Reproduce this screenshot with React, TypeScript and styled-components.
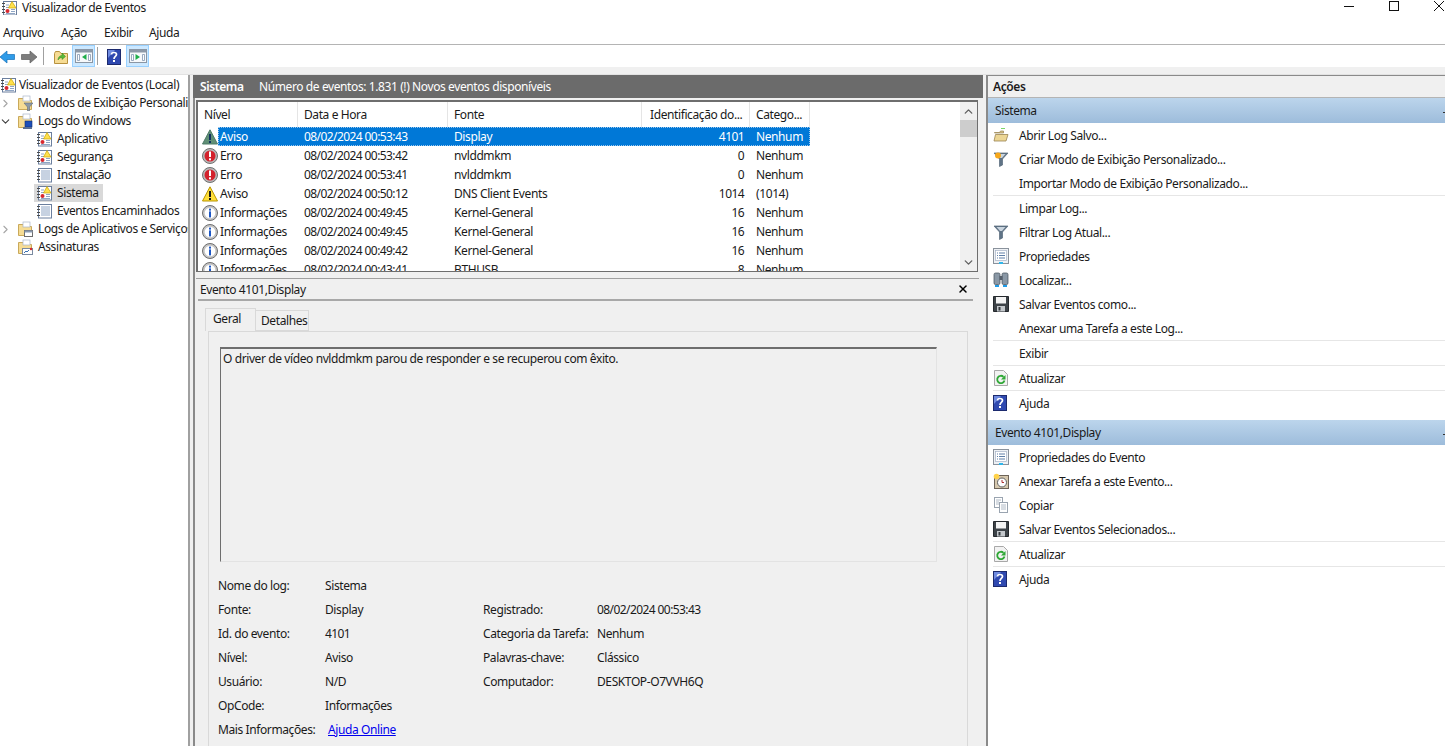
import React from "react"
import styled, { createGlobalStyle } from "styled-components"
import { ChevronRight, ChevronDown, ChevronUp, X } from "lucide-react"

const GlobalStyle = createGlobalStyle`
  html, body {
    margin: 0;
    padding: 0;
    height: 100%;
    overflow: hidden;
    background: #fff;
  }
  body {
    font-family: "Noto Sans", "Open Sans", "Liberation Sans", sans-serif;
    font-size: 12px;
    letter-spacing: -0.4px;
    color: #1a1a1a;
  }
  * { box-sizing: border-box; }
  svg { flex: none; }
`

const Window = styled.div`
  width: 1445px;
  height: 746px;
  display: flex;
  flex-direction: column;
  overflow: hidden;
  background: #f0f0f0;
`

const TitleBar = styled.div`
  height: 15px;
  flex: none;
  display: flex;
  align-items: center;
  background: #fff;
  padding-left: 2px;
`

const TitleText = styled.span`
  margin-left: 4px;
  flex: 1;
  line-height: 15px;
`

const WindowButtons = styled.div`
  display: flex;
  align-self: flex-start;
  align-items: center;
  height: 11px;
  gap: 35px;
  padding-right: 1px;
`

const MenuBar = styled.div`
  height: 30px;
  flex: none;
  display: flex;
  align-items: center;
  padding: 6px 0 0 3px;
  background: #fff;
  border-bottom: 1px solid #b4b4b4;
`

const MenuItem = styled.span<{ $w: number }>`
  width: ${({ $w }) => $w}px;
`

const ToolBar = styled.div`
  height: 22px;
  flex: none;
  display: flex;
  align-items: center;
  background: #fff;
`

const ToolIcon = styled.span<{ $ml?: number }>`
  display: flex;
  margin-top: 1px;
  margin-left: ${({ $ml }) => $ml ?? 0}px;
`

const ToolToggle = styled.span<{ $ml: number }>`
  width: 23px;
  height: 22px;
  margin-left: ${({ $ml }) => $ml}px;
  display: flex;
  align-items: center;
  justify-content: center;
  background: #cce8ff;
  border: 1px solid #99d1ff;
`

const ToolSep = styled.span<{ $ml: number }>`
  width: 1px;
  height: 18px;
  margin-left: ${({ $ml }) => $ml}px;
  background: #a0a0a0;
`

const Body = styled.div`
  flex: 1;
  min-height: 0;
  display: flex;
  margin-top: 7px;
  border-top: 1px solid #e2e2e2;
  background: #f0f0f0;
`

const TreePane = styled.div`
  width: 190px;
  flex: none;
  padding-top: 1px;
  background: #fff;
  border-right: 2px solid #a0a0a0;
  overflow: hidden;
`

const TreeRow = styled.div<{ $level: number }>`
  height: 18px;
  display: flex;
  align-items: center;
  white-space: nowrap;
  padding-left: ${({ $level }) => ($level === 0 ? 1 : $level === 1 ? 0 : 37)}px;
`

const Twisty = styled.span`
  width: 17px;
  flex: none;
  margin-left: -3px;
  margin-right: 3px;
  display: flex;
  justify-content: center;
  color: #a6a6a6;

  &[data-open="true"] {
    color: #404040;
  }
`

const TreeLabel = styled.span<{ $ml?: number; $selected?: boolean }>`
  margin-left: ${({ $ml }) => $ml ?? 4}px;
  padding-right: ${({ $selected }) => ($selected ? 4 : 0)}px;
  line-height: 18px;
`

const SelectedTreeItem = styled.span`
  display: flex;
  align-items: center;
  margin-left: -3px;
  padding-left: 3px;
  background: #d9d9d9;
`

const CenterPane = styled.div`
  width: 790px;
  flex: none;
  margin-left: 3px;
  display: flex;
  flex-direction: column;
  border-left: 2px solid #8a8a8a;
  min-height: 0;
`

const PaneHeader = styled.div`
  height: 23px;
  flex: none;
  display: flex;
  align-items: center;
  background: #6b6b6b;
  color: #fff;
  margin-left: -2px;
  padding-left: 7px;
`

const PaneTitle = styled.span`
  font-weight: 600;
  width: 59px;
`

const ListBox = styled.div`
  height: 172px;
  flex: none;
  margin: 2px 5px 0 1px;
  background: #fff;
  border-top: 2px solid #6e6e6e;
  border-left: 2px solid #6e6e6e;
  border-right: 1px solid #6e6e6e;
  border-bottom: 1px solid #6e6e6e;
  display: flex;
  overflow: hidden;
`

const ListMain = styled.div`
  flex: 1;
  min-width: 0;
  overflow: hidden;
`

const HeaderRow = styled.div`
  height: 25px;
  width: 612px;
  display: flex;
`

const HeadCell = styled.span<{ $w: number; $pad?: number }>`
  width: ${({ $w }) => $w}px;
  flex: none;
  display: flex;
  align-items: center;
  padding-left: ${({ $pad }) => $pad ?? 6}px;
  border-right: 1px solid #e5e5e5;
  white-space: nowrap;
`

const EventRow = styled.div`
  height: 19px;
  width: 612px;
  display: flex;
  align-items: center;
  padding-left: 4px;
`

const RowBand = styled.div<{ $selected?: boolean }>`
  width: 592px;
  height: 19px;
  display: flex;
  align-items: center;
  color: ${({ $selected }) => ($selected ? "#fff" : "#1a1a1a")};
  background: ${({ $selected }) => ($selected ? "#0078d7" : "transparent")};
  outline: ${({ $selected }) => ($selected ? "1px dotted #9cc8ee" : "none")};
  outline-offset: -1px;
`

const Cell = styled.span<{ $w: number; $right?: boolean; $pad?: number; $tight?: boolean }>`
  width: ${({ $w }) => $w}px;
  flex: none;
  padding: 0 ${({ $right }) => ($right ? 6 : 0)}px 0 ${({ $pad }) => $pad ?? 6}px;
  text-align: ${({ $right }) => ($right ? "right" : "left")};
  white-space: nowrap;
  letter-spacing: ${({ $tight }) => ($tight ? "-0.58px" : "inherit")};
`

const Scrollbar = styled.div`
  width: 17px;
  flex: none;
  display: flex;
  flex-direction: column;
  background: #f0f0f0;
`

const ScrollArrow = styled.span`
  height: 18px;
  flex: none;
  display: flex;
  align-items: center;
  justify-content: center;
  color: #606060;
`

const ScrollTrack = styled.div`
  flex: 1;
`

const ScrollThumb = styled.div`
  height: 17px;
  background: #cdcdcd;
`

const DetailPane = styled.div`
  flex: 1;
  min-height: 0;
  margin: 6px 4px 0 1px;
  border-top: 1px solid #a0a0a0;
  overflow: hidden;
`

const DetailHeader = styled.div`
  height: 22px;
  margin-left: 2px;
  margin-right: 6px;
  display: flex;
  align-items: center;
  justify-content: space-between;
  padding: 0 4px 0 2px;
  border-bottom: 2px solid #a8a8a8;
`

const TabStrip = styled.div`
  height: 30px;
  display: flex;
  align-items: flex-end;
  padding-left: 9px;
`

const Tab = styled.span<{ $active?: boolean; $w: number }>`
  display: flex;
  align-items: center;
  width: ${({ $w }) => $w}px;
  height: ${({ $active }) => ($active ? 23 : 21)}px;
  padding: 0 0 ${({ $active }) => ($active ? 3 : 0)}px ${({ $active }) => ($active ? 7 : 5)}px;
  background: #f0f0f0;
  border: 1px solid #d9d9d9;
  border-bottom: ${({ $active }) => ($active ? "none" : "1px solid #d9d9d9")};
  border-left: ${({ $active }) => ($active ? "1px solid #d9d9d9" : "none")};
`

const TabBody = styled.div`
  margin-left: 12px;
  width: 760px;
  height: 420px;
  padding: 15px 0 0 11px;
  border-top: 1px solid #d9d9d9;
  border-left: 1px solid #d9d9d9;
  border-right: 1px solid #d9d9d9;
`

const MessageBox = styled.div`
  width: 717px;
  height: 215px;
  padding: 1px 2px;
  border-top: 2px solid #6e6e6e;
  border-left: 1px solid #6e6e6e;
  border-bottom: 1px solid #e3e3e3;
  border-right: 1px solid #e3e3e3;
`

const FieldGrid = styled.div`
  margin: 11px 0 0 -2px;
  display: grid;
  grid-template-columns: 107px 158px 114px 1fr;
  grid-auto-rows: 24px;
  align-items: center;
  white-space: nowrap;
`

const TightValue = styled.span`
  letter-spacing: -0.58px;
`

const HelpLink = styled.a`
  color: #0000ee;
  text-decoration: underline;
  margin-left: 3px;
`

const ActionsPane = styled.div`
  flex: 1;
  min-width: 0;
  margin-left: 3px;
  display: flex;
  flex-direction: column;
  background: #fff;
  border-left: 2px solid #8a8a8a;
  border-top: 1px solid #8a8a8a;
`

const ActionsTitle = styled.div`
  height: 22px;
  flex: none;
  display: flex;
  align-items: center;
  padding-left: 5px;
  font-weight: 600;
  background: #f0f0f0;
  border-bottom: 1px solid #b4b4b4;
`

const ActionHead = styled.div<{ $gap?: number }>`
  height: 25px;
  flex: none;
  display: flex;
  align-items: center;
  justify-content: space-between;
  padding-left: 7px;
  margin-top: ${({ $gap }) => $gap ?? 0}px;
  background: linear-gradient(#bcd5ec, #9dbcdb);
  color: #1a1a1a;

  &::after {
    content: "";
    width: 2px;
    height: 1px;
    margin-top: 3px;
    background: #333;
  }
`

const ActionItem = styled.div`
  height: 24px;
  flex: none;
  display: flex;
  align-items: center;
  padding-left: 5px;
`

const ActionIcon = styled.span`
  width: 26px;
  flex: none;
  display: flex;
`

const ActionSep = styled.div`
  height: 1px;
  flex: none;
  margin: 0 0 0 5px;
  background: #e6e6e6;
`

// ---- icons ----

const LogIcon = ({ flagged }: { flagged?: boolean }) => (
  <svg width="16" height="16" viewBox="0 0 16 16">
    <rect x="1.500" y="1.500" width="13" height="13.500" fill="#fff" stroke="#6b7f9e" />
    <path d="M0 3.500h3M0 6.500h3M0 9.500h3M0 12.500h3" stroke="#4a4a4a" />
    {flagged ? (
      <>
        <path d="M4 5h3M4 7.500h3M9 9.500h4M9 11.500h4M4 13.500h9" stroke="#8fa5c4" />
        <path d="M10 1.500 14 8H6.500z" fill="#ffe14d" stroke="#c9a400" strokeWidth=".7" />
        <circle cx="5.500" cy="11" r="2" fill="#d8282f" />
      </>
    ) : (
      <path d="M4 4h9M4 6h9M4 8h9M4 10h9M4 12h9" stroke="#8fa5c4" />
    )}
  </svg>
)

const FolderBase = ({ children }: { children?: React.ReactNode }) => (
  <svg width="16" height="16" viewBox="0 0 16 16">
    <path d="M1.500 3.500V14.500H14.500V5.500H8L6.500 3.500z" fill="#f6dc94" stroke="#c9a95a" />
    <rect x="6" y="1" width="7" height="5" fill="#fff" stroke="#a9b6c8" strokeWidth=".7" />
    {children}
  </svg>
)

const FilterFolderIcon = () => (
  <FolderBase>
    <path d="M7 8h9l-3.500 4v4h-2v-4z" fill="#8d9aa8" stroke="#5f6b78" strokeWidth=".6" />
  </FolderBase>
)

const WindowsFolderIcon = () => (
  <FolderBase>
    <rect x="8" y="8" width="7" height="6" fill="#1d4fb8" stroke="#0f2c70" strokeWidth=".6" />
    <rect x="6" y="14" width="9" height="2" fill="#5a6f94" />
  </FolderBase>
)

const AppsFolderIcon = () => (
  <FolderBase>
    <rect x="7.500" y="9.500" width="8" height="6" fill="#fff" stroke="#6e6e6e" />
    <rect x="7.500" y="9.500" width="8" height="2" fill="#8a9ab0" />
  </FolderBase>
)

const SubsFolderIcon = () => (
  <FolderBase>
    <rect x="5.500" y="9.500" width="10" height="6" fill="#fff" stroke="#7a8aa0" />
    <path d="M7 14l2-2 1 1 2-2" stroke="#3a70b0" fill="none" />
    <circle cx="14" cy="10" r="1.200" fill="#d8282f" />
  </FolderBase>
)

const WarnIcon = ({ selected }: { selected?: boolean }) => (
  <svg width="16" height="16" viewBox="0 0 16 16">
    <path
      d="M8 .8 15.500 15H.5z"
      fill={selected ? "#5f8f75" : "#ffdf3a"}
      stroke={selected ? "#4f7a68" : "#b89400"}
      strokeLinejoin="round"
    />
    <rect x="7" y="5" width="2" height="6" fill={selected ? "#12305f" : "#1a1a1a"} />
    <rect x="7" y="12" width="2" height="2" fill={selected ? "#12305f" : "#1a1a1a"} />
  </svg>
)

const ErrorIcon = () => (
  <svg width="16" height="16" viewBox="0 0 16 16">
    <circle cx="8" cy="8" r="7.500" fill="#b9b9b9" stroke="#707070" />
    <circle cx="8" cy="8" r="5.500" fill="#d3212c" />
    <rect x="7" y="3.500" width="2" height="5.500" fill="#fff" />
    <rect x="7" y="10.300" width="2" height="2" fill="#fff" />
  </svg>
)

const InfoIcon = () => (
  <svg width="16" height="16" viewBox="0 0 16 16">
    <circle cx="8" cy="8" r="7.500" fill="#c6c6c6" stroke="#6e6e6e" />
    <circle cx="8" cy="8" r="5.300" fill="#fff" />
    <rect x="7" y="3.600" width="2" height="2" fill="#1c56c4" />
    <rect x="7" y="6.400" width="2" height="6" fill="#1c56c4" />
  </svg>
)

const BackArrow = () => (
  <svg width="15" height="14" viewBox="0 0 15 14">
    <path d="M0 7 7 1v3.500h7.500v5H7V13z" fill="#2f9be8" stroke="#1570b8" strokeWidth=".7" />
  </svg>
)

const ForwardArrow = () => (
  <svg width="16" height="14" viewBox="0 0 16 14">
    <path d="M16 7 9 1v3.500H.5v5H9V13z" fill="#7d7d7d" stroke="#5e5e5e" strokeWidth=".7" />
  </svg>
)

const UpFolderIcon = () => (
  <svg width="16" height="16" viewBox="0 0 16 16">
    <path d="M1.500 4.500V14.500H14.500V4.500H8L6.500 2.500H2.500z" fill="#f6dc94" stroke="#b8923f" />
    <path d="M5 11c0-3 2-4.500 4-4.500V4l3.500 3.500L9 10.500V8.500C7.500 8.500 6 9.500 5 11z" fill="#5cb83a" stroke="#2f8a1d" strokeWidth=".5" />
  </svg>
)

const PanelIcon = ({ side }: { side: "left" | "right" }) => (
  <svg width="18" height="14" viewBox="0 0 18 14">
    <rect x=".5" y=".5" width="17" height="13" fill="#f7f9fb" stroke="#8a96a4" />
    <rect x="1" y="1" width="16" height="2.500" fill="#8d99a8" />
    <path d="M2.500 5.500h2v6h-2zM13.500 5.500h2v6h-2z" fill="#fff" stroke="#8296b0" strokeWidth=".8" />
    {side === "left" ? (
      <path d="M11.500 5v6L7 8z" fill="#1fae4a" />
    ) : (
      <path d="M6.500 5v6l4.500-3z" fill="#1fae4a" />
    )}
  </svg>
)

const HelpIcon = () => (
  <svg width="14" height="16" viewBox="0 0 14 16">
    <rect x=".5" y=".5" width="13" height="15" fill="#2f49b0" stroke="#1c2a6e" />
    <path d="M1 1h7L1 9z" fill="#6f8be0" />
    <path d="M4.500 5.500C4.500 2.800 9.500 2.800 9.500 5.500 9.500 7.500 7 7.500 7 10" fill="none" stroke="#fff" strokeWidth="1.700" />
    <rect x="6" y="11" width="2" height="2" fill="#fff" />
  </svg>
)

const OpenIcon = () => (
  <svg width="16" height="16" viewBox="0 0 16 16">
    <path d="M8 1.500h4" stroke="#7bd66a" />
    <path d="M1.500 5.500h5l1-1.500h3v2H1.500z" fill="#d9c48a" stroke="#9a8452" strokeWidth=".7" />
    <path d="M1 14 2.500 7.500H15L13 14z" fill="#ecd695" stroke="#9a8452" strokeWidth=".8" />
  </svg>
)

const FunnelIcon = ({ sun }: { sun?: boolean }) => (
  <svg width="16" height="16" viewBox="0 0 16 16">
    <path d="M1 2h14L9.500 8v6l-3 1.500V8z" fill="#5f7386" stroke="#56687a" strokeWidth=".7" />
    <path d="M3.500 3h9L9 7H7z" fill="#c9d4de" />
    {sun && <circle cx="5" cy="4.500" r="3" fill="#f6a81c" />}
  </svg>
)

const PropsIcon = () => (
  <svg width="16" height="16" viewBox="0 0 16 16">
    <rect x=".5" y=".5" width="15" height="15" fill="#eef1f5" stroke="#8a929c" />
    <rect x="2.500" y="2.500" width="11" height="10" fill="#fff" stroke="#a5b3c6" strokeWidth=".7" />
    <path d="M4 5h1M6 5h6M4 7.500h1M6 7.500h6M4 10h1M6 10h6" stroke="#5f7fa8" />
    <rect x="6" y="14" width="4" height="2" fill="#2fb6ea" />
  </svg>
)

const BinocularsIcon = () => (
  <svg width="16" height="16" viewBox="0 0 16 16">
    <rect x="1" y="1" width="6" height="11.500" rx="1.500" fill="#8a98a6" stroke="#3f4a56" strokeWidth=".7" />
    <rect x="9" y="1" width="6" height="11.500" rx="1.500" fill="#8a98a6" stroke="#3f4a56" strokeWidth=".7" />
    <rect x="6.500" y="4" width="3" height="4" fill="#56606c" />
    <path d="M2 14h4M10 14h4" stroke="#1e9be8" strokeWidth="2" />
  </svg>
)

const SaveIcon = () => (
  <svg width="16" height="16" viewBox="0 0 16 16">
    <path d="M.5.5h15v15H.5z" fill="#3d4348" stroke="#25292d" />
    <rect x="3" y="1" width="10" height="6.500" fill="#f4f4f4" />
    <rect x="4" y="10" width="8" height="5.500" fill="#c4c8cc" />
    <rect x="5.500" y="11" width="2" height="3.500" fill="#33383c" />
  </svg>
)

const RefreshIcon = () => (
  <svg width="16" height="16" viewBox="0 0 16 16">
    <path d="M1.500.5h9l4 4v11h-13z" fill="#f2f2f2" stroke="#a8a8a8" />
    <path d="M11.500 10.500a3.700 3.700 0 1 1-1-3.700" fill="none" stroke="#2fa836" strokeWidth="1.800" />
    <path d="M12.500 5v4.500H8z" fill="#2fa836" />
  </svg>
)

const ClockIcon = () => (
  <svg width="16" height="16" viewBox="0 0 16 16">
    <rect x="1.500" y="2.500" width="14" height="13" fill="#d6c8ae" stroke="#6e6458" />
    <circle cx="9" cy="9.500" r="4.500" fill="#fff" stroke="#5f5f5f" />
    <path d="M9 7v2.500h2" stroke="#b03030" fill="none" />
    <circle cx="3.500" cy="3.500" r="2.800" fill="#ffd24a" />
  </svg>
)

const CopyIcon = () => (
  <svg width="16" height="16" viewBox="0 0 16 16">
    <rect x="1.500" y=".5" width="8" height="10" fill="#fff" stroke="#9aa4b0" />
    <rect x="6.500" y="5.500" width="8" height="10" fill="#fff" stroke="#9aa4b0" />
    <path d="M3 3h5M3 5h3M3 7h3M8 8h5M8 10h5M8 12h5" stroke="#b0bac6" />
  </svg>
)

const MinimizeGlyph = () => (
  <svg width="10" height="11" viewBox="0 0 10 11">
    <path d="M0 6.500h10" stroke="#111" />
  </svg>
)

const MaximizeGlyph = () => (
  <svg width="10" height="10" viewBox="0 0 10 10">
    <rect x=".5" y=".5" width="9" height="9" fill="none" stroke="#111" />
  </svg>
)

const CloseGlyph = () => (
  <svg width="10" height="10" viewBox="0 0 10 10">
    <path d="M0 0l10 10M10 0 0 10" stroke="#111" strokeWidth="1" />
  </svg>
)

// ---- data ----

const events = [
  { kind: "warn", level: "Aviso", date: "08/02/2024 00:53:43", source: "Display", id: "4101", cat: "Nenhum" },
  { kind: "error", level: "Erro", date: "08/02/2024 00:53:42", source: "nvlddmkm", id: "0", cat: "Nenhum" },
  { kind: "error", level: "Erro", date: "08/02/2024 00:53:41", source: "nvlddmkm", id: "0", cat: "Nenhum" },
  { kind: "warn", level: "Aviso", date: "08/02/2024 00:50:12", source: "DNS Client Events", id: "1014", cat: "(1014)" },
  { kind: "info", level: "Informações", date: "08/02/2024 00:49:45", source: "Kernel-General", id: "16", cat: "Nenhum" },
  { kind: "info", level: "Informações", date: "08/02/2024 00:49:45", source: "Kernel-General", id: "16", cat: "Nenhum" },
  { kind: "info", level: "Informações", date: "08/02/2024 00:49:42", source: "Kernel-General", id: "16", cat: "Nenhum" },
  { kind: "info", level: "Informações", date: "08/02/2024 00:43:41", source: "BTHUSB", id: "8", cat: "Nenhum" },
]

const systemActions: (["sep"] | [React.ReactNode, string])[] = [
  [<OpenIcon />, "Abrir Log Salvo..."],
  [<FunnelIcon sun />, "Criar Modo de Exibição Personalizado..."],
  [null, "Importar Modo de Exibição Personalizado..."],
  ["sep"],
  [null, "Limpar Log..."],
  [<FunnelIcon />, "Filtrar Log Atual..."],
  [<PropsIcon />, "Propriedades"],
  [<BinocularsIcon />, "Localizar..."],
  [<SaveIcon />, "Salvar Eventos como..."],
  [null, "Anexar uma Tarefa a este Log..."],
  ["sep"],
  [null, "Exibir"],
  ["sep"],
  [<RefreshIcon />, "Atualizar"],
  ["sep"],
  [<HelpIcon />, "Ajuda"],
]

const eventActions: (["sep"] | [React.ReactNode, string])[] = [
  [<PropsIcon />, "Propriedades do Evento"],
  [<ClockIcon />, "Anexar Tarefa a este Evento..."],
  [<CopyIcon />, "Copiar"],
  [<SaveIcon />, "Salvar Eventos Selecionados..."],
  ["sep"],
  [<RefreshIcon />, "Atualizar"],
  ["sep"],
  [<HelpIcon />, "Ajuda"],
]

function ActionList({ items }: { items: (["sep"] | [React.ReactNode, string])[] }) {
  return (
    <>
      {items.map((item, i) =>
        item[0] === "sep" ? (
          <ActionSep key={i} />
        ) : (
          <ActionItem key={i}>
            <ActionIcon>{item[0]}</ActionIcon>
            {item[1]}
          </ActionItem>
        )
      )}
    </>
  )
}

export default function App() {
  return (
    <Window>
      <GlobalStyle />
      <TitleBar>
        <LogIcon flagged />
        <TitleText>Visualizador de Eventos</TitleText>
        <WindowButtons>
          <MinimizeGlyph />
          <MaximizeGlyph />
          <CloseGlyph />
        </WindowButtons>
      </TitleBar>
      <MenuBar>
        <MenuItem $w={58}>Arquivo</MenuItem>
        <MenuItem $w={43}>Ação</MenuItem>
        <MenuItem $w={45}>Exibir</MenuItem>
        <MenuItem $w={50}>Ajuda</MenuItem>
      </MenuBar>
      <ToolBar>
        <ToolIcon><BackArrow /></ToolIcon>
        <ToolIcon $ml={6}><ForwardArrow /></ToolIcon>
        <ToolSep $ml={6} />
        <ToolIcon $ml={9}><UpFolderIcon /></ToolIcon>
        <ToolToggle $ml={3}><PanelIcon side="left" /></ToolToggle>
        <ToolSep $ml={2} />
        <ToolIcon $ml={9}><HelpIcon /></ToolIcon>
        <ToolToggle $ml={5}><PanelIcon side="right" /></ToolToggle>
      </ToolBar>
      <Body>
        <TreePane>
          <TreeRow $level={0}>
            <LogIcon flagged />
            <TreeLabel $ml={2}>Visualizador de Eventos (Local)</TreeLabel>
          </TreeRow>
          <TreeRow $level={1}>
            <Twisty><ChevronRight size={13} /></Twisty>
            <FilterFolderIcon />
            <TreeLabel $ml={5}>Modos de Exibição Personalizados</TreeLabel>
          </TreeRow>
          <TreeRow $level={1}>
            <Twisty data-open="true"><ChevronDown size={13} /></Twisty>
            <WindowsFolderIcon />
            <TreeLabel $ml={5}>Logs do Windows</TreeLabel>
          </TreeRow>
          <TreeRow $level={2}>
            <LogIcon flagged />
            <TreeLabel>Aplicativo</TreeLabel>
          </TreeRow>
          <TreeRow $level={2}>
            <LogIcon flagged />
            <TreeLabel>Segurança</TreeLabel>
          </TreeRow>
          <TreeRow $level={2}>
            <LogIcon />
            <TreeLabel>Instalação</TreeLabel>
          </TreeRow>
          <TreeRow $level={2}>
            <SelectedTreeItem>
              <LogIcon flagged />
              <TreeLabel $selected>Sistema</TreeLabel>
            </SelectedTreeItem>
          </TreeRow>
          <TreeRow $level={2}>
            <LogIcon />
            <TreeLabel>Eventos Encaminhados</TreeLabel>
          </TreeRow>
          <TreeRow $level={1}>
            <Twisty><ChevronRight size={13} /></Twisty>
            <AppsFolderIcon />
            <TreeLabel $ml={5}>Logs de Aplicativos e Serviços</TreeLabel>
          </TreeRow>
          <TreeRow $level={1}>
            <Twisty />
            <SubsFolderIcon />
            <TreeLabel $ml={5}>Assinaturas</TreeLabel>
          </TreeRow>
        </TreePane>

        <CenterPane>
          <PaneHeader>
            <PaneTitle>Sistema</PaneTitle>
            <span>Número de eventos: 1.831 (!) Novos eventos disponíveis</span>
          </PaneHeader>
          <ListBox>
            <ListMain>
              <HeaderRow>
                <HeadCell $w={100}>Nível</HeadCell>
                <HeadCell $w={150}>Data e Hora</HeadCell>
                <HeadCell $w={194}>Fonte</HeadCell>
                <HeadCell $w={108} $pad={8}>Identificação do...</HeadCell>
                <HeadCell $w={60}>Catego...</HeadCell>
              </HeaderRow>
              {events.map((e, i) => (
                <EventRow key={i}>
                  {e.kind === "warn" && <WarnIcon selected={i === 0} />}
                  {e.kind === "error" && <ErrorIcon />}
                  {e.kind === "info" && <InfoIcon />}
                  <RowBand $selected={i === 0}>
                    <Cell $w={80} $pad={2}>{e.level}</Cell>
                    <Cell $w={150} $tight>{e.date}</Cell>
                    <Cell $w={194}>{e.source}</Cell>
                    <Cell $w={108} $right $tight>{e.id}</Cell>
                    <Cell $w={60}>{e.cat}</Cell>
                  </RowBand>
                </EventRow>
              ))}
            </ListMain>
            <Scrollbar>
              <ScrollArrow><ChevronUp size={13} strokeWidth={2.5} /></ScrollArrow>
              <ScrollThumb />
              <ScrollTrack />
              <ScrollArrow><ChevronDown size={13} strokeWidth={2.5} /></ScrollArrow>
            </Scrollbar>
          </ListBox>
          <DetailPane>
            <DetailHeader>
              Evento 4101,Display
              <X size={12} strokeWidth={3} color="#000" />
            </DetailHeader>
            <TabStrip>
              <Tab $active $w={51}>Geral</Tab>
              <Tab $w={53}>Detalhes</Tab>
            </TabStrip>
            <TabBody>
              <MessageBox>O driver de vídeo nvlddmkm parou de responder e se recuperou com êxito.</MessageBox>
              <FieldGrid>
                <span>Nome do log:</span><span>Sistema</span><span /><span />
                <span>Fonte:</span><span>Display</span><span>Registrado:</span><TightValue>08/02/2024 00:53:43</TightValue>
                <span>Id. do evento:</span><TightValue>4101</TightValue><span>Categoria da Tarefa:</span><span>Nenhum</span>
                <span>Nível:</span><span>Aviso</span><span>Palavras-chave:</span><span>Clássico</span>
                <span>Usuário:</span><span>N/D</span><span>Computador:</span><span>DESKTOP-O7VVH6Q</span>
                <span>OpCode:</span><span>Informações</span><span /><span />
                <span>Mais Informações:</span><span><HelpLink href="#">Ajuda Online</HelpLink></span><span /><span />
              </FieldGrid>
            </TabBody>
          </DetailPane>
        </CenterPane>

        <ActionsPane>
          <ActionsTitle>Ações</ActionsTitle>
          <ActionHead>Sistema</ActionHead>
          <ActionList items={systemActions} />
          <ActionHead $gap={5}>Evento 4101,Display</ActionHead>
          <ActionList items={eventActions} />
        </ActionsPane>
      </Body>
    </Window>
  )
}
